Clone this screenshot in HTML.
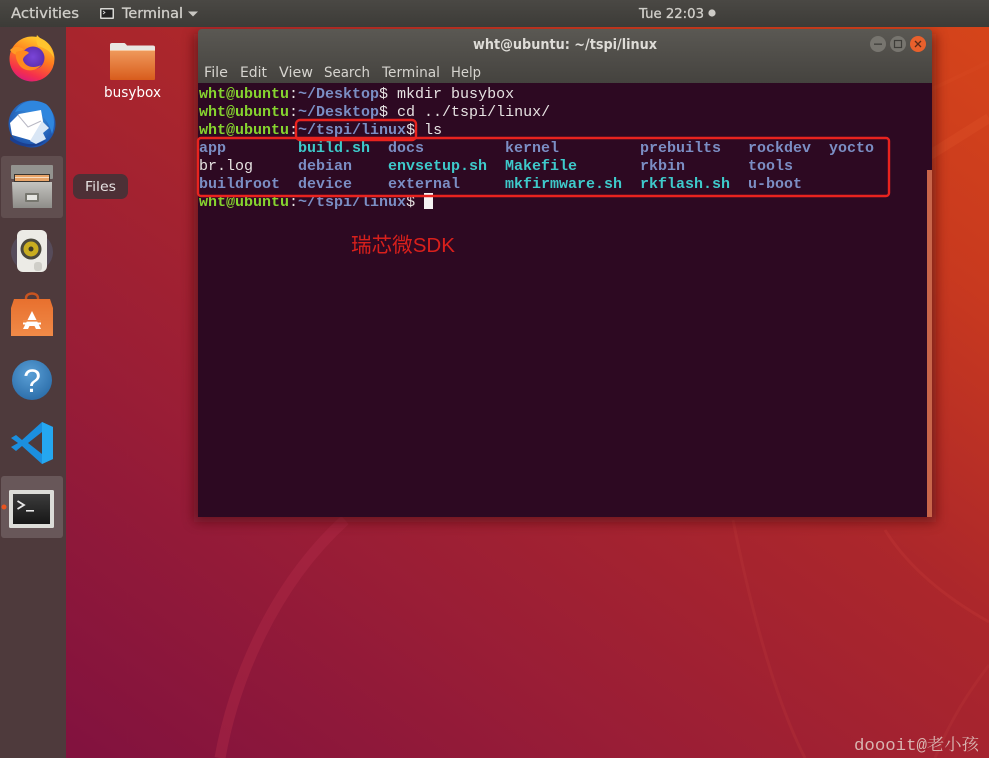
<!DOCTYPE html>
<html><head><meta charset="utf-8"><style>
html,body{margin:0;padding:0;width:989px;height:758px;overflow:hidden;background:#9c1f33}
svg{display:block;filter:blur(.35px)}
.m{font-family:"Liberation Mono",monospace;font-size:15px;white-space:pre}
.b{font-weight:bold}
.g{fill:#86d42f}.bl{fill:#7b8ec4}.c{fill:#3ecacb}.w{fill:#e6e2e2}
.s{font-family:"DejaVu Sans","Liberation Sans",sans-serif}
</style></head><body>
<svg width="989" height="758" viewBox="0 0 989 758" xmlns="http://www.w3.org/2000/svg">
<defs>
<linearGradient id="bg" x1="0.98" y1="0" x2="0.04" y2="1">
<stop offset="0" stop-color="#d6451a"/><stop offset="0.2" stop-color="#c8391f"/><stop offset="0.42" stop-color="#ac272b"/><stop offset="0.7" stop-color="#991d36"/><stop offset="1" stop-color="#80113f"/>
</linearGradient>
<linearGradient id="bar" x1="0" y1="0" x2="0" y2="1"><stop offset="0" stop-color="#4a4844"/><stop offset="1" stop-color="#3c3b37"/></linearGradient>
<linearGradient id="tb" x1="0" y1="0" x2="0" y2="1"><stop offset="0" stop-color="#5a5853"/><stop offset="1" stop-color="#44423e"/></linearGradient>
<linearGradient id="folder" x1="0" y1="0" x2="0" y2="1"><stop offset="0" stop-color="#ef9a5c"/><stop offset="1" stop-color="#d85c1c"/></linearGradient>
<linearGradient id="ff" x1="0.7" y1="0" x2="0.3" y2="1"><stop offset="0" stop-color="#ffd22e"/><stop offset="0.45" stop-color="#ff7a1e"/><stop offset="0.8" stop-color="#f5304c"/><stop offset="1" stop-color="#d81a80"/></linearGradient>
<radialGradient id="ffc" cx="0.5" cy="0.45" r="0.6"><stop offset="0" stop-color="#7a45d8"/><stop offset="1" stop-color="#5a2aa8"/></radialGradient>
<radialGradient id="tbd" cx="0.5" cy="0.4" r="0.6"><stop offset="0" stop-color="#3f9be8"/><stop offset="1" stop-color="#1c4fa8"/></radialGradient>
<linearGradient id="cab" x1="0" y1="0" x2="0" y2="1"><stop offset="0" stop-color="#c4c3bf"/><stop offset="1" stop-color="#8e8d89"/></linearGradient>
<radialGradient id="help" cx="0.45" cy="0.35" r="0.7"><stop offset="0" stop-color="#5a9fd6"/><stop offset="1" stop-color="#2a6ca8"/></radialGradient>
<linearGradient id="shop" x1="0" y1="0" x2="0" y2="1"><stop offset="0" stop-color="#e8702e"/><stop offset="1" stop-color="#f08a48"/></linearGradient>
<linearGradient id="tm" x1="0" y1="0" x2="0" y2="1"><stop offset="0" stop-color="#3c3c3c"/><stop offset="1" stop-color="#161616"/></linearGradient>
<filter id="blur" x="-20%" y="-20%" width="140%" height="140%"><feGaussianBlur stdDeviation="6"/></filter>
</defs>

<!-- wallpaper -->
<rect width="989" height="758" fill="url(#bg)"/>
<path d="M220 758C232 690 268 590 345 520" fill="none" stroke="#b02a48" stroke-width="11" opacity=".45"/>
<path d="M733 520C745 580 770 690 805 758" fill="none" stroke="#c03a3a" stroke-width="3" opacity=".25"/>
<path d="M885 530C910 570 950 600 989 622" fill="none" stroke="#c83c38" stroke-width="3" opacity=".3"/>
<path d="M930 155L989 118" fill="none" stroke="#dc5028" stroke-width="10" opacity=".4"/>
<path d="M930 90L989 62" fill="none" stroke="#dc5028" stroke-width="4" opacity=".2"/>
<path d="M935 758C950 720 970 690 989 665" fill="none" stroke="#c03a3a" stroke-width="3" opacity=".25"/>

<!-- window shadow -->
<rect x="194" y="34" width="742" height="488" fill="#401010" opacity=".55" filter="url(#blur)"/>

<!-- dock -->
<rect x="0" y="27" width="66" height="731" fill="#4e3a3c"/>
<rect x="1" y="156" width="62" height="62" rx="3" fill="#fff" opacity=".1"/>
<rect x="1" y="476" width="62" height="62" rx="3" fill="#fff" opacity=".15"/>
<circle cx="4" cy="507" r="2.5" fill="#e95420"/>

<!-- firefox -->
<g>
<circle cx="32" cy="59" r="22.5" fill="url(#ff)"/>
<path d="M37 35C42 41 52 44 54 58C50 50 44 48 38 46C36 42 36 38 37 35Z" fill="#ffc42e"/>
<path d="M10 50C14 46 18 46 24 49L17 55C14 54 12 53 10 50Z" fill="#ff9a24"/>
<circle cx="33" cy="58" r="11.5" fill="url(#ffc)"/>
<path d="M16 52C21 50 27 50 29 53C26 55 23 57 23 60C25 67 34 69 41 65C36 72 25 72 20 66C17 62 15 57 16 52Z" fill="#ff8a1e"/>
</g>

<!-- thunderbird -->
<g>
<circle cx="32" cy="124" r="23.5" fill="url(#tbd)"/>
<path d="M15 112C21 100 35 98 46 104C54 110 56 122 52 134C50 126 46 118 38 113C30 110 22 110 15 112Z" fill="#2f86de"/>
<path d="M10 140C20 148 36 150 46 140C36 146 22 146 10 136Z" fill="#1a3f90"/>
<path d="M10 123L19 114L41 110L44 127L42 139L33 141L12 135Z" fill="#fff"/>
<path d="M18 115L28 127L41 121" fill="none" stroke="#b8b8c4" stroke-width="1"/>
<path d="M42 121L49 128L43 133L46 139L36 144L30 141Z" fill="#d9e6f5"/>
</g>

<!-- files cabinet -->
<g>
<rect x="11" y="165" width="42" height="14" rx="1" fill="#93938f"/>
<rect x="14" y="174" width="36" height="9" fill="#3a3530"/>
<rect x="15" y="175" width="34" height="6" fill="#e8a468"/>
<rect x="15" y="177" width="34" height="1" fill="#f7dcc0"/>
<path d="M12 182H52L52 208H13Z" fill="url(#cab)"/>
<rect x="25" y="193" width="14" height="9" rx="1" fill="#77776f"/>
<rect x="27" y="195" width="10" height="5" fill="#e6e6e2"/>
</g>

<!-- rhythmbox -->
<g>
<ellipse cx="32" cy="252" rx="21" ry="20" fill="#6a7aa8" opacity=".28"/>
<rect x="17" y="230" width="30" height="42" rx="6" fill="#ecebe6"/>
<circle cx="31" cy="249" r="10.5" fill="#4a483e"/>
<circle cx="31" cy="249" r="7.5" fill="#c9ad20"/>
<circle cx="31" cy="249" r="2.5" fill="#3e3a28"/>
<rect x="34" y="262" width="8" height="9" rx="3" fill="#cfcec8"/>
</g>

<!-- software -->
<g>
<path d="M26 305V298C26 292 38 292 38 298V305" fill="none" stroke="#c85420" stroke-width="2.4"/>
<path d="M14 299H50L53 308V336H11V308Z" fill="url(#shop)"/>
<path d="M32 311L23 329H28L29.500 326H34.500L36 329H41Z" fill="#fff"/>
<rect x="23" y="320" width="18" height="1.600" fill="#f08a48"/>
<rect x="23" y="322.500" width="18" height="2" fill="#fff"/>
</g>

<!-- help -->
<g>
<circle cx="32" cy="380" r="20" fill="url(#help)"/>
<text x="32" y="392" text-anchor="middle" font-family="'Liberation Sans',sans-serif" font-size="32" fill="#fff">?</text>
</g>

<!-- vscode -->
<g>
<path d="M42 422L53 427V459L42 464L22 446L16 451L11 447L18 443L11 438L16 435L22 440Z" fill="#1b8fdf"/>
<path d="M42 422L53 427V459L42 464Z" fill="#25a7f0"/>
<path d="M42 432V454L28 443Z" fill="#4e3a3c"/>
</g>

<!-- terminal dock -->
<g>
<rect x="9" y="490" width="45" height="38" rx="1.500" fill="#dcdcd8"/>
<rect x="13" y="494" width="37" height="30" fill="url(#tm)"/>
<path d="M17.500 501L24 505L17.500 509" fill="none" stroke="#e8e8e8" stroke-width="1.800"/>
<rect x="26" y="510" width="8" height="1.600" fill="#e8e8e8"/>
</g>

<!-- top bar -->
<rect x="0" y="0" width="989" height="27" fill="url(#bar)"/>
<g class="s" font-size="14" fill="#cfcdc8" stroke="#cfcdc8" stroke-width=".3">
<text x="11" y="18" textLength="68" lengthAdjust="spacingAndGlyphs">Activities</text>
<text x="122" y="18" textLength="61" lengthAdjust="spacingAndGlyphs">Terminal</text>
<text x="639" y="18" textLength="65" lengthAdjust="spacingAndGlyphs" font-size="13">Tue 22:03</text>
</g>
<rect x="100" y="8" width="14" height="11" rx="1" fill="#d8d8d4"/>
<rect x="101.500" y="9.500" width="11" height="8" fill="#222"/>
<path d="M103 11L105 12.500L103 14" fill="none" stroke="#ddd" stroke-width=".8"/>
<path d="M188 11.500H198L193 16.500Z" fill="#c9c7c2"/>
<circle cx="712" cy="13" r="3.600" fill="#cdcbc6"/>

<!-- desktop folder -->
<g>
<path d="M110 47V44.500C110 43.500 111 43 112 43H124C125 43 126 44 127 45.500H153C154 45.500 155 46 155 47V50H110Z" fill="#e8e6e2"/>
<rect x="110" y="50" width="45" height="30" rx="1" fill="url(#folder)"/>
<rect x="110" y="50" width="45" height="1" fill="#f6c8a0"/>
</g>
<text x="104" y="97" class="s" font-size="14" fill="#fff" textLength="57" lengthAdjust="spacingAndGlyphs">busybox</text>

<!-- tooltip -->
<rect x="73" y="174" width="55" height="25" rx="7" fill="#4d3036"/>
<text x="85" y="191" class="s" font-size="13.500" fill="#e6e2e2" textLength="31" lengthAdjust="spacingAndGlyphs">Files</text>

<!-- terminal window -->
<path d="M198 33Q198 29 202 29H928Q932 29 932 33V84H198Z" fill="url(#tb)"/>
<rect x="198" y="83" width="734" height="434" fill="#2d0922"/>
<rect x="927" y="170" width="5" height="347" fill="#c9654a"/>
<text x="473" y="49" class="s" font-size="14" font-weight="bold" fill="#dedcd7" textLength="184" lengthAdjust="spacingAndGlyphs">wht@ubuntu: ~/tspi/linux</text>

<circle cx="878" cy="44" r="8" fill="#77756f"/>
<rect x="874" y="43.500" width="8" height="1.300" fill="#3e3d39"/>
<circle cx="898" cy="44" r="8" fill="#77756f"/>
<rect x="894.500" y="40.500" width="7" height="7" fill="none" stroke="#3e3d39" stroke-width="1.200"/>
<circle cx="918" cy="44" r="8" fill="#e8602c"/>
<path d="M915 41L921 47M921 41L915 47" stroke="#5a2a18" stroke-width="1.300"/>

<g class="s" font-size="14" fill="#d6d4cf">
<text x="204" y="77" textLength="24" lengthAdjust="spacingAndGlyphs">File</text>
<text x="240" y="77" textLength="27" lengthAdjust="spacingAndGlyphs">Edit</text>
<text x="279" y="77" textLength="34" lengthAdjust="spacingAndGlyphs">View</text>
<text x="324" y="77" textLength="46" lengthAdjust="spacingAndGlyphs">Search</text>
<text x="382" y="77" textLength="58" lengthAdjust="spacingAndGlyphs">Terminal</text>
<text x="451" y="77" textLength="30" lengthAdjust="spacingAndGlyphs">Help</text>
</g>

<!-- terminal text -->
<g class="m">
<text x="199" y="98"><tspan class="g b">wht@ubuntu</tspan><tspan class="w">:</tspan><tspan class="bl b">~/Desktop</tspan><tspan class="w">$ mkdir busybox</tspan></text>
<text x="199" y="116"><tspan class="g b">wht@ubuntu</tspan><tspan class="w">:</tspan><tspan class="bl b">~/Desktop</tspan><tspan class="w">$ cd ../tspi/linux/</tspan></text>
<text x="199" y="134"><tspan class="g b">wht@ubuntu</tspan><tspan class="w">:</tspan><tspan class="bl b">~/tspi/linux</tspan><tspan class="w">$ ls</tspan></text>

<text x="199" y="152" class="bl b">app</text>
<text x="298" y="152" class="c b">build.sh</text>
<text x="388" y="152" class="bl b">docs</text>
<text x="505" y="152" class="bl b">kernel</text>
<text x="640" y="152" class="bl b">prebuilts</text>
<text x="748" y="152" class="bl b">rockdev</text>
<text x="829" y="152" class="bl b">yocto</text>

<text x="199" y="170" class="w">br.log</text>
<text x="298" y="170" class="bl b">debian</text>
<text x="388" y="170" class="c b">envsetup.sh</text>
<text x="505" y="170" class="c b">Makefile</text>
<text x="640" y="170" class="bl b">rkbin</text>
<text x="748" y="170" class="bl b">tools</text>

<text x="199" y="188" class="bl b">buildroot</text>
<text x="298" y="188" class="bl b">device</text>
<text x="388" y="188" class="bl b">external</text>
<text x="505" y="188" class="c b">mkfirmware.sh</text>
<text x="640" y="188" class="c b">rkflash.sh</text>
<text x="748" y="188" class="bl b">u-boot</text>

<text x="199" y="206"><tspan class="g b">wht@ubuntu</tspan><tspan class="w">:</tspan><tspan class="bl b">~/tspi/linux</tspan><tspan class="w">$</tspan></text>
</g>
<rect x="424" y="193" width="9" height="16" fill="#f4f2f2"/>

<!-- annotations -->
<rect x="296" y="120" width="120" height="20" rx="4" fill="none" stroke="#e8231f" stroke-width="2.400"/>
<rect x="198" y="138" width="691" height="58" rx="3" fill="none" stroke="#e8231f" stroke-width="2.400"/>
<text x="351" y="252" font-family="'Liberation Sans','Noto Sans CJK SC',sans-serif" font-size="20.500" fill="#d8201c" textLength="104" lengthAdjust="spacingAndGlyphs">瑞芯微SDK</text>

<!-- watermark -->
<text x="854" y="750" font-family="'Liberation Mono','Noto Serif CJK SC',monospace" font-size="16.500" fill="#d8b4b0" textLength="125" lengthAdjust="spacingAndGlyphs">doooit@老小孩</text>
</svg>
</body></html>
